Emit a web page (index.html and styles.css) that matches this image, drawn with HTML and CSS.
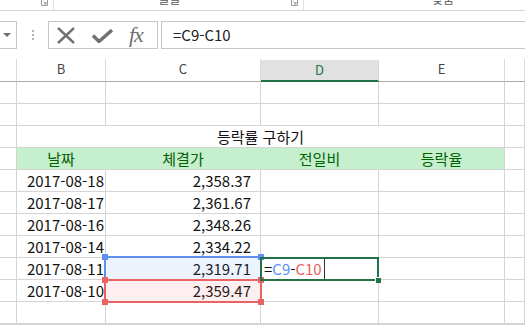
FILE: index.html
```html
<!DOCTYPE html>
<html lang="ko">
<head>
	<meta charset="UTF-8">
	<title>등락률 구하기</title>
	<link rel="stylesheet" href="styles.css">
</head>
<body>
<div class="ribbon">
	<div class="grp g1"><span class="lbl"></span><svg class="launch" width="7" height="6" viewBox="0 0 7 6"><path d="M0.5 0v5.5h6V0" fill="none" stroke="#9a9a9a"/><path d="M2.5 1.5l2.5 2.5M5 2v2H3" fill="none" stroke="#9a9a9a"/></svg></div>
	<div class="grp g2"><span class="lbl">글꼴</span><svg class="launch" width="7" height="6" viewBox="0 0 7 6"><path d="M0.5 0v5.5h6V0" fill="none" stroke="#9a9a9a"/><path d="M2.5 1.5l2.5 2.5M5 2v2H3" fill="none" stroke="#9a9a9a"/></svg></div>
	<div class="grp g3"><span class="lbl">맞춤</span></div>
</div>

<div class="fbar">
	<div class="namebox"><svg width="8" height="5" viewBox="0 0 8 5"><path d="M0 0h8L4 4z" fill="#6d6d6d"/></svg></div>
	<div class="grip"><i></i><i></i><i></i></div>
	<div class="fbtns">
		<svg width="18" height="17" viewBox="0 0 18 17"><path d="M1 1l16 15M17 1L1 16" stroke="#727272" stroke-width="2.4" fill="none"/></svg>
		<svg width="21" height="14" viewBox="0 0 21 14"><path d="M1 6.5l6 6L20 1" stroke="#727272" stroke-width="3.4" fill="none"/></svg>
		<span class="fx">fx</span>
	</div>
	<div class="finput">=C9-C10</div>
</div>

<div class="sheet">
	<div class="c hd"></div><div class="c hd">B</div><div class="c hd">C</div><div class="c hd sel">D</div><div class="c hd">E</div><div class="c hd"></div>

	<div class="c"></div><div class="c"></div><div class="c"></div><div class="c"></div><div class="c"></div><div class="c"></div>
	<div class="c"></div><div class="c"></div><div class="c"></div><div class="c"></div><div class="c"></div><div class="c"></div>
	<div class="c"></div><div class="c title">등락률 구하기</div><div class="c"></div>
	<div class="c"></div><div class="c gr">날짜</div><div class="c gr">체결가</div><div class="c gr">전일비</div><div class="c gr last">등락율</div><div class="c"></div>

	<div class="c"></div><div class="c dt">2017-08-18</div><div class="c num">2,358.37</div><div class="c"></div><div class="c"></div><div class="c"></div>
	<div class="c"></div><div class="c dt">2017-08-17</div><div class="c num">2,361.67</div><div class="c"></div><div class="c"></div><div class="c"></div>
	<div class="c"></div><div class="c dt">2017-08-16</div><div class="c num">2,348.26</div><div class="c"></div><div class="c"></div><div class="c"></div>
	<div class="c"></div><div class="c dt">2017-08-14</div><div class="c num">2,334.22</div><div class="c"></div><div class="c"></div><div class="c"></div>
	<div class="c"></div><div class="c dt">2017-08-11</div><div class="c num">2,319.71</div><div class="c edit">=<span class="rb">C9</span>-<span class="rr">C10</span><i class="caret"></i></div><div class="c"></div><div class="c"></div>
	<div class="c"></div><div class="c dt">2017-08-10</div><div class="c num">2,359.47</div><div class="c"></div><div class="c"></div><div class="c"></div>
	<div class="c"></div><div class="c"></div><div class="c"></div><div class="c"></div><div class="c"></div><div class="c"></div>
	<div class="c"></div><div class="c"></div><div class="c"></div><div class="c"></div><div class="c"></div><div class="c"></div>

	<!-- formula reference highlights -->
	<div class="ref blue"><i class="h tl"></i><i class="h tr"></i></div>
	<div class="ref red"><i class="h tl"></i><i class="h tr"></i><i class="h bl"></i><i class="h br"></i></div>
	<div class="active"><i class="fill"></i></div>
</div>
</body>
</html>
```

FILE: styles.css
```css
body {
	margin: 0;
	background: #fff;
	font-family: "Noto Sans CJK KR", "Noto Sans", sans-serif;
	overflow: hidden;
	width: 525px;
	height: 331px;
}

/* ribbon remnant */
.ribbon {
	display: flex;
	height: 10px;
	border-bottom: 1px solid #d6d6d6;
	overflow: hidden;
}
.grp {
	position: relative;
	display: flex;
	justify-content: center;
	height: 10px;
	border-right: 1px solid #e1e1e1;
	box-sizing: border-box;
}
.g1 { width: 54px; }
.g2 { width: 250px; padding-right: 18px; }
.g3 { flex: 1; border-right: 0; justify-content: flex-start; padding-left: 128px; }
.lbl {
	font-size: 12px;
	line-height: 12px;
	color: #5a5a5a;
	margin-top: -7px;
}
.launch {
	position: absolute;
	right: 5px;
	top: 0;
}

/* formula bar */
.fbar {
	display: flex;
	align-items: stretch;
	height: 28px;
	margin-top: 10px;
}
.namebox {
	width: 17px;
	box-sizing: border-box;
	border: 1px solid #c6c6c6;
	border-left: 0;
	display: flex;
	align-items: center;
	padding-left: 3px;
}
.grip {
	width: 31px;
	display: flex;
	flex-direction: column;
	align-items: center;
	justify-content: center;
	gap: 2px;
}
.grip i {
	width: 2px;
	height: 2px;
	background: #b5b5b5;
}
.fbtns {
	width: 110px;
	box-sizing: border-box;
	border: 1px solid #c6c6c6;
	display: flex;
	align-items: center;
	padding-left: 8px;
}
.fbtns svg:first-child { margin-right: 17px; }
.fbtns svg:nth-child(2) { margin-right: 16px; margin-top: 2px; }
.fx {
	font-family: "Liberation Serif", "DejaVu Serif", serif;
	font-style: italic;
	font-size: 22px;
	line-height: 22px;
	color: #6f6f6f;
	letter-spacing: -1px;
}
.finput {
	flex: 1;
	margin-left: 3px;
	border: 1px solid #c6c6c6;
	border-right: 0;
	padding-left: 11px;
	font-size: 15px;
	line-height: 25px;
	color: #222;
}

/* sheet grid */
.sheet {
	position: relative;
	margin-top: 10px;
	display: grid;
	grid-template-columns: 17px 89px 155px 118px 126px 1fr;
	grid-template-rows: 23px repeat(11, 22px);
	font-size: 15px;
	color: #111;
}
.c {
	box-sizing: border-box;
	border-right: 1px solid #d4d4d4;
	border-bottom: 1px solid #d4d4d4;
	line-height: 21px;
	white-space: nowrap;
}
.hd {
	border-bottom-color: #ababab;
	border-right-color: #dadada;
	text-align: center;
	font-size: 13px;
	color: #444;
	line-height: 20px;
}
.hd.sel {
	background: #e1e1e1;
	color: #217346;
	border-bottom: 2px solid #217346;
	margin-top: 1px;
	line-height: 19px;
}
.title {
	grid-column: 2 / 6;
	text-align: center;
}
.gr {
	background: #c6efce;
	color: #006100;
	text-align: center;
	border-right-color: #c6efce;
}
.gr.last { border-right-color: #d4d4d4; }
.dt {
	text-align: right;
	padding-right: 1px;
}
.num {
	text-align: right;
	padding-right: 9px;
}
.edit {
	padding-left: 3px;
	display: flex;
	align-items: center;
}
.rb { color: #5b8ff0; }
.rr { color: #e8625f; }
.caret {
	width: 1px;
	height: 21px;
	background: #333;
	margin-left: 2px;
}

/* reference boxes drawn over the grid */
.ref, .active {
	position: absolute;
	box-sizing: border-box;
	border: 2px solid;
}
.blue {
	left: 104px;
	top: 197px;
	width: 158px;
	height: 25px;
	border-color: #5f8ff0;
	background: rgba(95, 143, 240, 0.11);
}
.red {
	left: 104px;
	top: 220px;
	width: 158px;
	height: 24px;
	border-color: #e86464;
	background: rgba(232, 100, 100, 0.1);
}
.h {
	position: absolute;
	width: 6px;
	height: 6px;
}
.blue .h { background: #5f8ff0; }
.red .h { background: #e86464; }
.tl { left: -4px; top: -4px; }
.tr { right: -4px; top: -4px; }
.bl { left: -4px; bottom: -4px; }
.br { right: -4px; bottom: -4px; }
.active {
	left: 260px;
	top: 198px;
	width: 119px;
	height: 24px;
	border-color: #217346;
}
.fill {
	position: absolute;
	right: -4px;
	bottom: -4px;
	width: 5px;
	height: 5px;
	background: #217346;
	border: 1px solid #fff;
	border-right: 0;
	border-bottom: 0;
}
```
